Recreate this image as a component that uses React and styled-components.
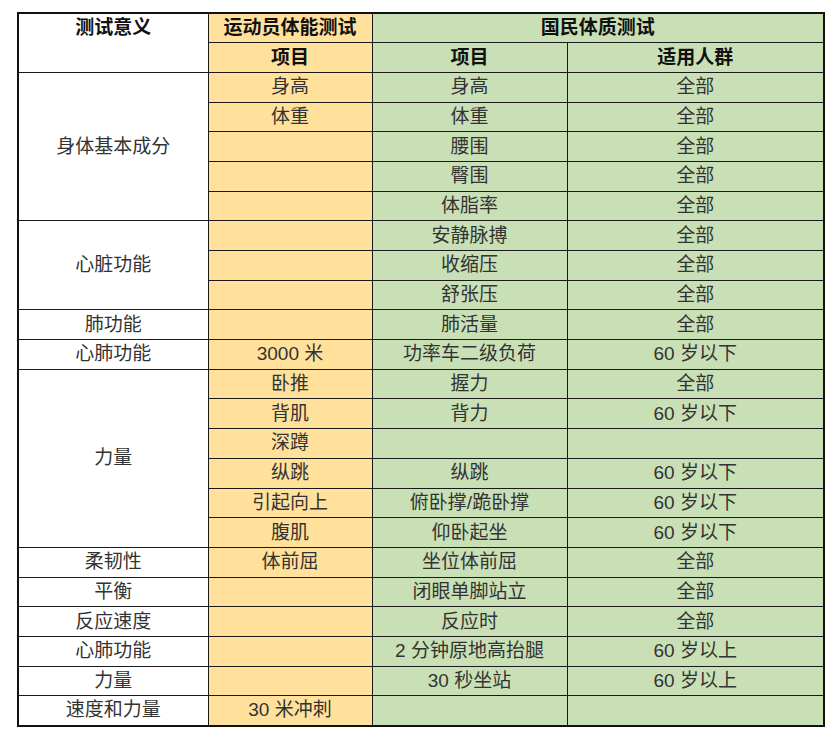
import React from 'react';
import styled, { createGlobalStyle } from 'styled-components';

const GlobalStyle = createGlobalStyle`
  html, body {
    margin: 0;
    padding: 0;
    background: #ffffff;
  }
  body {
    font-family: "Liberation Sans", "Noto Sans CJK SC", sans-serif;
  }
`;

const Page = styled.div`
  width: 838px;
  height: 742px;
  padding: 12px 0 0 17px;
  box-sizing: border-box;
`;

const Table = styled.table`
  border-collapse: collapse;
  table-layout: fixed;
  width: 806px;
  border: 2px solid #111;
`;

const tones = {
  white: '#ffffff',
  yellow: '#ffe19c',
  green: '#c9e0b6',
};

const Row = styled.tr`
  height: 29.7px;
`;

const Head = styled.th`
  background: ${(p) => tones[p.$tone || 'white']};
  border: 1.5px solid #1a1a1a;
  padding: 0;
  font-size: 19px;
  font-weight: 700;
  color: #111;
  text-align: center;
  vertical-align: ${(p) => (p.$top ? 'top' : 'middle')};
  line-height: 28px;
`;

const Cell = styled.td`
  background: ${(p) => tones[p.$tone || 'white']};
  border: 1.5px solid #1a1a1a;
  padding: 0;
  font-size: 19px;
  font-weight: 400;
  color: #333;
  text-align: center;
  vertical-align: middle;
  line-height: 28px;
  white-space: nowrap;
`;

// [group label, rowspan] | null, athlete item, national item, population
const rows = [
  [['身体基本成分', 5], '身高', '身高', '全部'],
  [null, '体重', '体重', '全部'],
  [null, '', '腰围', '全部'],
  [null, '', '臀围', '全部'],
  [null, '', '体脂率', '全部'],
  [['心脏功能', 3], '', '安静脉搏', '全部'],
  [null, '', '收缩压', '全部'],
  [null, '', '舒张压', '全部'],
  [['肺功能', 1], '', '肺活量', '全部'],
  [['心肺功能', 1], '3000 米', '功率车二级负荷', '60 岁以下'],
  [['力量', 6], '卧推', '握力', '全部'],
  [null, '背肌', '背力', '60 岁以下'],
  [null, '深蹲', '', ''],
  [null, '纵跳', '纵跳', '60 岁以下'],
  [null, '引起向上', '俯卧撑/跪卧撑', '60 岁以下'],
  [null, '腹肌', '仰卧起坐', '60 岁以下'],
  [['柔韧性', 1], '体前屈', '坐位体前屈', '全部'],
  [['平衡', 1], '', '闭眼单脚站立', '全部'],
  [['反应速度', 1], '', '反应时', '全部'],
  [['心肺功能', 1], '', '2 分钟原地高抬腿', '60 岁以上'],
  [['力量', 1], '', '30 秒坐站', '60 岁以上'],
  [['速度和力量', 1], '30 米冲刺', '', ''],
];

const App = () => {
  return (
    <>
      <GlobalStyle />
      <Page>
        <Table>
          <colgroup>
            <col style={{ width: '190px' }} />
            <col style={{ width: '164px' }} />
            <col style={{ width: '195px' }} />
            <col style={{ width: '257px' }} />
          </colgroup>
          <thead>
            <Row>
              <Head rowSpan={2} $top>测试意义</Head>
              <Head $tone="yellow">运动员体能测试</Head>
              <Head $tone="green" colSpan={2}>国民体质测试</Head>
            </Row>
            <Row>
              <Head $tone="yellow">项目</Head>
              <Head $tone="green">项目</Head>
              <Head $tone="green">适用人群</Head>
            </Row>
          </thead>
          <tbody>
            {rows.map((r, i) => (
              <Row key={i}>
                {r[0] && <Cell rowSpan={r[0][1]}>{r[0][0]}</Cell>}
                <Cell $tone="yellow">{r[1]}</Cell>
                <Cell $tone="green">{r[2]}</Cell>
                <Cell $tone="green">{r[3]}</Cell>
              </Row>
            ))}
          </tbody>
        </Table>
      </Page>
    </>
  );
};

export default App;
